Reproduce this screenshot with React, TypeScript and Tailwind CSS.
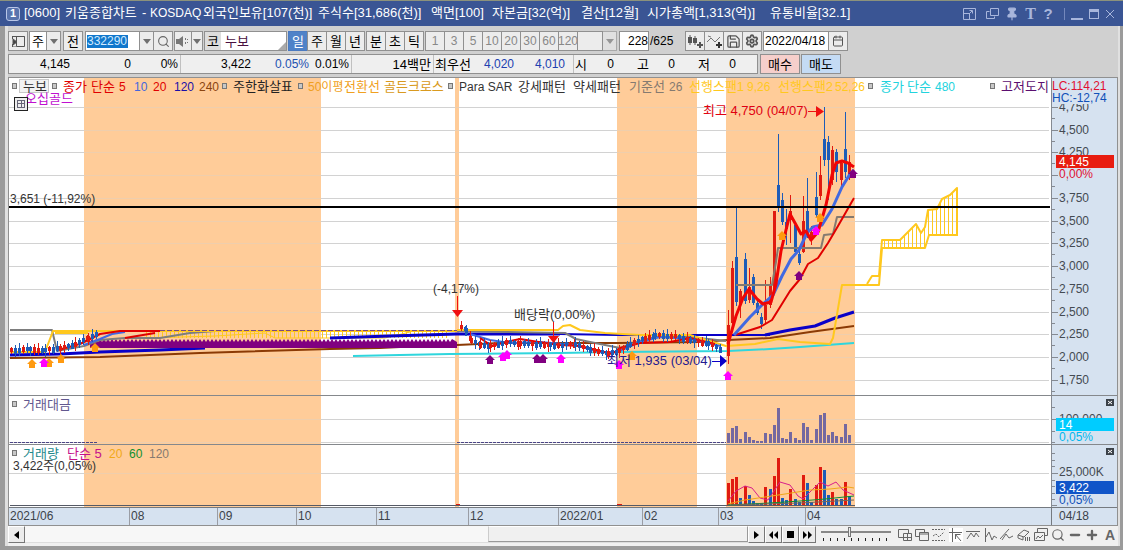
import { useState, type ReactNode } from "react";
import { Search, Settings, Save, Pin, Calendar, Minus, Plus } from "lucide-react";
import { clsx } from "clsx";

const BANDS = [
  [84, 321],
  [455, 459],
  [617, 697],
  [726, 855],
];

const PRICE_TICKS: [string, number][] = [
  ["4,750", 107],
  ["4,500", 130],
  ["4,250", 152],
  ["4,000", 175],
  ["3,750", 198],
  ["3,500", 221],
  ["3,250", 243],
  ["3,000", 266],
  ["2,750", 289],
  ["2,500", 312],
  ["2,250", 334],
  ["2,000", 357],
  ["1,750", 380],
];

const MONTHS: [string, number][] = [
  ["2021/06", 8],
  ["08", 129],
  ["09", 217],
  ["10", 296],
  ["11", 376],
  ["12", 468],
  ["2022/01", 558],
  ["02", 642],
  ["03", 718],
  ["04", 805],
];

// text, x, colour
const LEGEND: [string, number, string][] = [
  ["누보", 23, "#333"],
  ["종가", 63, "#e00000"],
  ["단순", 91, "#e00000"],
  ["5", 119, "#e00000"],
  ["10", 134, "#4466dd"],
  ["20", 153, "#e00000"],
  ["120", 174, "#1a0fa8"],
  ["240", 199, "#8b4510"],
  ["주한화살표", 233, "#222"],
  ["50이평", 308, "#f0a020"],
  ["전환선", 344, "#f0a020"],
  ["골든크로스", 384, "#d99a20"],
  ["Para SAR", 459, "#333"],
  ["강세패턴", 518, "#333"],
  ["약세패턴", 573, "#333"],
  ["기준선", 629, "#857a70"],
  ["26", 669, "#857a70"],
  ["선행스팬1", 689, "#ffc81e"],
  ["9,26", 747, "#ffc81e"],
  ["선행스팬2", 778, "#ffc81e"],
  ["52,26", 835, "#ffc81e"],
  ["종가", 880, "#22d3dd"],
  ["단순", 907, "#22d3dd"],
  ["480", 935, "#22d3dd"],
  ["고저도지", 1001, "#5b0f70"],
];

const RED = "#e01b10";
const BLUE = "#1d5cb8";

// x, high, body top, body bottom, low, rising
type Candle = [number, number, number, number, number, boolean];

const CANDLES: Candle[] = [
  [728, 310, 325, 356, 364, true],
  [732, 261, 268, 323, 330, true],
  [736, 207, 257, 302, 306, false],
  [740, 289, 291, 305, 318, true],
  [745, 253, 259, 301, 304, false],
  [749, 268, 287, 300, 303, true],
  [753, 274, 277, 303, 305, false],
  [757, 300, 303, 313, 315, false],
  [761, 313, 317, 324, 329, false],
  [765, 280, 305, 320, 324, true],
  [770, 277, 286, 305, 308, true],
  [774, 211, 211, 290, 290, true],
  [778, 134, 185, 207, 212, false],
  [782, 193, 200, 222, 225, false],
  [786, 209, 222, 229, 245, false],
  [790, 195, 211, 220, 243, true],
  [795, 222, 225, 252, 255, false],
  [799, 250, 254, 263, 265, false],
  [803, 196, 221, 252, 253, true],
  [807, 178, 211, 235, 238, false],
  [811, 226, 232, 240, 245, true],
  [816, 172, 197, 215, 217, false],
  [820, 156, 175, 196, 200, true],
  [824, 107, 139, 160, 166, false],
  [828, 136, 142, 160, 200, false],
  [832, 146, 150, 180, 185, true],
  [836, 149, 152, 172, 182, false],
  [841, 160, 163, 180, 188, true],
  [845, 112, 149, 172, 178, false],
  [849, 155, 162, 175, 180, true],
];

const AMOUNT = [
  10, 15, 17, 4, 11, 6, 3, 2, 2, 10, 9, 18, 35, 5, 4, 11, 5, 3, 20, 16, 3, 14, 28, 30, 8, 11, 7, 6,
  19, 8,
];
const VOLUME = [
  23, 27, 29, 8, 20, 11, 5, 3, 3, 19, 17, 30, 48, 8, 6, 17, 7, 4, 31, 23, 4, 21, 39, 36, 11, 14, 7,
  7, 24, 10,
];
const VOLUME_UP = "RRRBRBBBBRBRRBBRBBRBBRRBBRBBRB";

// centre line that the small daily candles swing around
const QUIET: [number, number][][] = [
  [[11, 350], [30, 349], [45, 350], [60, 348], [75, 344], [88, 338], [97, 333]],
  [[461, 327], [466, 330], [471, 340], [480, 344], [490, 346], [506, 342], [520, 343], [550, 345],
    [575, 344], [590, 349], [608, 353], [619, 351], [630, 344], [645, 338], [655, 335], [675, 336],
    [690, 340], [708, 343], [722, 350]],
];

function quietCandles(): Candle[] {
  const out: Candle[] = [];
  let n = 0;
  for (const path of QUIET) {
    for (let i = 0; i < path.length - 1; i++) {
      const [x0, y0] = path[i];
      const [x1, y1] = path[i + 1];
      for (let x = x0; x < x1; x += 4) {
        const y = Math.round(y0 + ((y1 - y0) * (x - x0)) / (x1 - x0));
        const j = (n * 7) % 5;
        out.push([x, y - 3 - j, y - 2, y + 2 + (j % 3), y + 4 + ((n * 3) % 4), (n * 5) % 7 < 3]);
        n++;
      }
    }
  }
  return out;
}

const ALL_CANDLES = [...quietCandles(), ...CANDLES];

const ARROWS: [number, number, string][] = [
  [32, 364, "#ff9a10"],
  [49, 363, "#ff9a10"],
  [44, 363, "#ff00ff"],
  [61, 359, "#ff9a10"],
  [95, 348, "#ff9a10"],
  [490, 360, "#800080"],
  [503, 357, "#ff00ff"],
  [507, 355, "#ff00ff"],
  [537, 359, "#800080"],
  [543, 359, "#800080"],
  [561, 359, "#ff00ff"],
  [619, 365, "#ff00ff"],
  [632, 356, "#ff9a10"],
  [728, 376, "#ff00ff"],
  [799, 276, "#800080"],
  [782, 236, "#ff9a10"],
  [816, 231, "#ff00ff"],
  [820, 218, "#ff9a10"],
  [853, 174, "#800080"],
];

const CLOUD_TOP: [number, number][] = [
  [867, 284], [872, 276], [879, 276], [882, 240], [900, 240], [908, 232], [916, 224], [921, 233],
  [925, 227], [928, 210], [937, 209], [942, 199], [950, 195], [957, 188],
];

function cloudY(x: number) {
  for (let i = 0; i < CLOUD_TOP.length - 1; i++) {
    const [x0, y0] = CLOUD_TOP[i];
    const [x1, y1] = CLOUD_TOP[i + 1];
    if (x >= x0 && x <= x1) return y0 + ((y1 - y0) * (x - x0)) / (x1 - x0);
  }
  return 188;
}

// 한글로 시작하는 글자는 13, 숫자는 12
function Label({ x, y, fill = "#333", children }: { x: number; y: number; fill?: string; children: string }) {
  return (
    <text x={x} y={y} fill={fill} fontSize={/^[가-힣]/.test(children) ? 13 : 12}>
      {children}
    </text>
  );
}

function Line({ d, stroke, width = 2 }: { d: string; stroke: string; width?: number }) {
  return <path d={d} fill="none" stroke={stroke} strokeWidth={width} strokeLinejoin="round" />;
}

function Marker({ x, y }: { x: number; y: number }) {
  return <rect x={x + 0.5} y={y + 0.5} width="4" height="5" fill="#c8c8c8" stroke="#777" />;
}

function Bands({ opacity = 1 }: { opacity?: number }) {
  return (
    <g fill="#ffcc99" opacity={opacity}>
      {BANDS.map(([a, b]) => (
        <rect key={a} x={a} y="78" width={b - a} height="429" />
      ))}
    </g>
  );
}

function PricePane() {
  return (
    <g>
      <path
        d={Array.from({ length: 76 }, (_, i) => `M${146 + i * 4}.5 332V338`).join("")}
        stroke="#ffc81e"
      />
      <Line stroke="#ffc81e" d="M146 338L215 336L265 333L275 338L385 338L410 332" width={1} />
      <Line stroke="#2fd6dd" d="M353 356L400 355L450 354L560 353L617 352L728 351L770 349L800 347L854 343" />
      <Line stroke="#8b3a05" d="M10 358L100 357L200 353L330 349L380 348L400 347M457 345L500 343L617 343L700 342L728 340L770 338L810 332L854 326" />
      <Line stroke="#0a00c8" width={3} d="M10 355L60 354L100 352L160 350L205 348M330 338L390 336L457 334L560 334" />
      {/* 전환 구간의 보라색 띠 */}
      <path
        d={
          "M90 348V342" +
          Array.from({ length: 91 }, (_, i) => `L${90 + i * 4} 342L${92 + i * 4} 339`).join("") +
          "L457 342V348Z"
        }
        fill="#800080"
      />
      <Line stroke="#0a00c8" d="M560 334L617 335L728 335L770 335" />
      <Line stroke="#0a00c8" width={3} d="M765 335L790 330L815 326L835 318L854 312" />
      <Line stroke="#7d7d7d" d="M10 330H52L57 351L84 346L100 340L125 338H160L190 333L215 331M457 331L565 333L576 339L590 342L620 348L640 341L655 337L690 337L726 341" />
      <Line stroke="#ffc81e" d="M10 352H45L53 331H98M55 333H88M98 331H457" />
      <path d="M125 330.500H457" stroke="#7a4a80" strokeDasharray="5 2" fill="none" />
      <Line stroke="#ffc81e" d="M457 330H558L563 326L570 325L580 330L605 333L640 335L690 335L726 346L755 344L778 339L800 342L830 344L833 338L842 285H867" />
      <Line stroke="#4169e1" d="M84 345L100 339L112 334L125 332M470 334L490 340L510 343L540 342L575 345L600 352L617 352L640 342L660 337L690 339L720 346" />
      <Line stroke="#e00000" d="M58 350L80 344L100 334L120 331H160M125 338L155 333M480 338L492 346L506 342L520 339L545 343L560 345L580 346L612 354L620 348L640 343L670 342L690 338L715 344" />

      {ALL_CANDLES.map(([x, hi, top, bottom, lo, up], i) => (
        <g key={i} fill={up ? RED : BLUE}>
          <rect x={x} y={hi} width="1" height={lo - hi} />
          <rect x={x - 1} y={top} width="3" height={bottom - top} />
        </g>
      ))}

      <Line stroke="#857a70" d="M736 285H772L776 262L778 248H821L824 235L833 234L837 217H854" />
      <Line stroke="#e00000" d="M735 335L760 327L772 320L790 291L800 279L808 264L818 258L828 243L838 226L846 212L854 198" />
      <Line stroke="#4169e1" width={3} d="M734 335L750 317L763 304L773 295L782 276L791 259L799 250L807 233L813 227L822 225L832 209L842 187L850 174L854 170" />
      <Line stroke="#f00505" width={3} d="M728 344L736 316L743 298L749 289L757 299L763 304L771 302L776 284L781 251L786 230L790 214L795 223L801 234L806 231L811 240L818 232L826 205L832 175L836 163L842 161L848 163L854 167" />

      {/* 선행스팬 구름 */}
      <path
        d={Array.from({ length: 19 }, (_, i) => {
          const x = 884 + i * 4;
          return `M${x}.5 ${cloudY(x)}V${x < 927 ? 248 : 235}`;
        }).join("")}
        stroke="#ffc81e"
      />
      <Line stroke="#ffc81e" d="M842 285H879L882 248H925L929 235H958" />
      <Line stroke="#ffc81e" d={"M" + CLOUD_TOP.map((p) => p.join(" ")).join("L") + "V235"} />

      <rect x="9" y="206" width="1041" height="2" fill="#000" />
      {ARROWS.map(([x, y, fill], i) => (
        <path key={i} d={`M${x} ${y - 5}l5 5h-2v4h-6v-4h-2z`} fill={fill} />
      ))}
      <path d="M457.500 296v15M553.500 322v15M808 111.500h10" stroke="#f01010" />
      <path d="M452 310h11l-5.500 7zM548 336h11l-5.500 7zM816 106v11l8-5.500z" fill="#f01010" />
      <path d="M712 361.500h9" stroke="#0a00c8" />
      <path d="M720 355v12l7-6z" fill="#0a00c8" />
      <Label x={10} y={203}>3,651 (-11,92%)</Label>
      <Label x={433} y={293}>(-4,17%)</Label>
      <Label x={514} y={319}>배당락(0,00%)</Label>
      <Label x={607} y={365} fill="#241a90">최저 1,935 (03/04)</Label>
      <Label x={703} y={115} fill="#e00010">최고 4,750 (04/07)</Label>
    </g>
  );
}

function VolumePanes() {
  return (
    <g>
      {AMOUNT.map((h, i) => (
        <rect key={i} x={CANDLES[i][0] - 1} y={443 - h} width="3" height={h} fill="#7468a0" />
      ))}
      <path d="M10 442.500H97M457 442.500H726" stroke="#4b4585" strokeDasharray="3 1" />
      {VOLUME.map((h, i) => (
        <rect
          key={i}
          x={CANDLES[i][0] - 1}
          y={506 - h}
          width="3"
          height={h}
          fill={VOLUME_UP[i] === "R" ? RED : BLUE}
        />
      ))}
      <path d="M10 505.500H855" stroke="#555a66" />
      <path d="M456 504.500h4M617 504.500h5" stroke={RED} />
      <Line width={1} stroke="#d8208c" d="M728 501L736 491L745 486L752 488L760 498L768 500L776 488L780 482L790 485L798 496L803 499L812 490L820 482L828 486L836 482L843 490L854 495" />
      <Line width={1} stroke="#f0a818" d="M728 504L745 500L765 497L785 494L810 490L830 489L848 487L854 488" />
      <Line width={1} stroke="#109030" d="M728 505L770 503L800 501L825 499L854 496" />
      <Line width={1} stroke="#70685c" d="M728 505L800 503L854 500" />
      <Marker x={12} y={401} />
      <Label x={23} y={409} fill="#62588f">거래대금</Label>
      <Marker x={12} y={450} />
      <Label x={23} y={458} fill="#22898c">거래량</Label>
      <Label x={67} y={458} fill="#c4108c">단순 5</Label>
      <Label x={109} y={458} fill="#f0a818">20</Label>
      <Label x={129} y={458} fill="#109030">60</Label>
      <Label x={149} y={458} fill="#857a70">120</Label>
      <Label x={13} y={470}>3,422주(0,05%)</Label>
    </g>
  );
}

function AxisColumn() {
  return (
    <g>
      <rect x="1051" y="78" width="66" height="447" fill="#d6e2f0" />
      <path d="M1051.500 78V525" stroke="#858a92" />
      {PRICE_TICKS.map(([text, y]) => (
        <g key={text}>
          <path d={`M1052 ${y}.5h6M1052 ${y + 11}.5h3`} stroke="#858a92" />
          <Label x={1059} y={y + 4} fill="#444a52">{text}</Label>
        </g>
      ))}
      <rect x="1052" y="79" width="65" height="25" fill="#d6e2f0" />
      <Label x={1052} y={90} fill="#e01030">LC:114,21</Label>
      <Label x={1052} y={102} fill="#1050b8">HC:-12,74</Label>
      <rect x="1058" y="168" width="50" height="12" fill="#d6e2f0" />
      <Label x={1059} y={178} fill="#e01030">0,00%</Label>
      <rect x="1056" y="155" width="58" height="13" fill="#e81c10" />
      <Label x={1059} y={166} fill="#fff">4,145</Label>

      <path d="M1052 419.500h6M1052 407.500h3M1052 431.500h3M1052 442.500h3" stroke="#858a92" />
      <Label x={1059} y={423} fill="#444a52">100,000</Label>
      <rect x="1056" y="418" width="58" height="13" fill="#00ccff" />
      <Label x={1059} y={429} fill="#fff">14</Label>
      <Label x={1059} y={441} fill="#00b8ee">0,05%</Label>
      <path
        d="M1052 473.500h6M1052 453.500h3M1052 460.500h3M1052 466.500h3M1052 480.500h3M1052 486.500h3M1052 493.500h3M1052 499.500h3M1052 505.500h5"
        stroke="#858a92"
      />
      <Label x={1059} y={476} fill="#444a52">25,000K</Label>
      <rect x="1056" y="481" width="58" height="13" fill="#1055c8" />
      <Label x={1059} y={492} fill="#fff">3,422</Label>
      <Label x={1059} y={504} fill="#1050b8">0,05%</Label>
      {[399, 448].map((y) => (
        <g key={y}>
          <rect x="1106" y={y} width="8" height="7" fill="#3b4148" />
          <path d={`M1108 ${y + 2}l4 3m0-3l-4 3`} stroke="#fff" />
        </g>
      ))}
    </g>
  );
}

function Chart() {
  return (
    <svg viewBox="9 78 1108 447" className="block w-full bg-white" role="img" aria-label="누보 일봉 차트">
      <Bands />
      <path
        d={[...PRICE_TICKS.map((t) => t[1]), 419, 442, 473].map((y) => `M9 ${y}.5H1049`).join("")}
        stroke="#d2d2d2"
      />
      <Bands opacity={0.65} />
      <VolumePanes />
      <PricePane />
      {[12, 52, 222, 298, 448, 868, 990].map((x) => (
        <Marker key={x} x={x} y={83} />
      ))}
      <rect x="19.500" y="79.500" width="29" height="13" fill="#f2f2f2" stroke="#c8c8c8" />
      {LEGEND.map(([text, x, fill]) => (
        <Label key={x} x={x} y={91} fill={fill}>{text}</Label>
      ))}
      <Label x={25} y={103} fill="#c010d0">오십골드</Label>
      <rect x="14.500" y="97.500" width="13" height="13" fill="#eee" stroke="#222" />
      <path d="M17 100.500h8M17 103.500h8M17 107.500h8M17.500 100v8M21.500 100v8M24.500 100v8" stroke="#667" />
      <AxisColumn />
      <path d="M9 395.500H1117M9 444.500H1117" stroke="#85888c" />
      <rect x="9" y="507" width="1108" height="18" fill="#d6e2f0" />
      <path d="M9 507.500H1117M1051.500 508V525" stroke="#757a80" />
      {MONTHS.map(([text, x]) => (
        <g key={text}>
          {x > 10 && <path d={`M${x}.5 508V525`} stroke="#9a9da5" />}
          <Label x={x + 2} y={520} fill="#3c424a">{text}</Label>
        </g>
      ))}
      <Label x={1059} y={520} fill="#3c424a">04/18</Label>
    </svg>
  );
}

const TITLE: [string, string][] = [
  ["[0600]", "w-[41px]"],
  ["키움종합차트", "w-[77px]"],
  ["-", "w-2"],
  ["KOSDAQ", "w-[53px] text-[12px] leading-[15px]"],
  ["외국인보유[107(천)]", "w-[115px]"],
  ["주식수[31,686(천)]", "w-[113px]"],
  ["액면[100]", "w-[61px]"],
  ["자본금[32(억)]", "w-[89px]"],
  ["결산[12월]", "w-[66px]"],
  ["시가총액[1,313(억)]", "w-[123px]"],
  ["유통비율[32.1]", "w-[96px]"],
];

function TitleBar() {
  return (
    <header className="flex h-[26px] items-center border-t border-[#8c927c] bg-[#3a5594] pl-1.5 pr-2 text-white">
      <span className="mr-1 flex size-[14px] items-center justify-center rounded-[3px] border border-[#b8c6e8] bg-[#5873ad] text-[11px] font-bold leading-none">
        1
      </span>
      <h1 className="flex whitespace-pre text-[13px]">
        {TITLE.map(([text, w]) => (
          <span key={text} className={clsx("shrink-0", w)}>{text}</span>
        ))}
      </h1>
      <div className="ml-auto flex items-center gap-[6px] text-[#a8b6dc]">
        <button aria-label="크기 고정">
          <svg width="13" height="12" fill="none" stroke="currentColor">
            <path d="M.5.5h12v11H.5zM.5 5.500h6v6" />
            <path d="M6 6l3-3M6.500 2.500h3v3" />
          </svg>
        </button>
        <button aria-label="창 복사" className="ml-1">
          <svg width="13" height="12" fill="none" stroke="currentColor">
            <path d="M4.500.5h8v7h-8zM3.500 3.500h-3v7h8v-2" />
          </svg>
        </button>
        <button aria-label="고정"><Pin size={14} fill="currentColor" /></button>
        <button className="font-['Liberation_Serif',serif] text-[16px] font-bold leading-none">T</button>
        <button className="w-3 text-[15px] font-bold leading-none">?</button>
        <span className="ml-1 h-3 w-px bg-[#7488bc]" />
        <button aria-label="최소화" className="flex h-3 w-3 items-end"><span className="h-0.5 w-full bg-current" /></button>
        <button aria-label="최대화" className="h-2.5 w-2.5 border border-t-[3px] border-current" />
        <button aria-label="닫기">
          <svg width="10" height="10" stroke="currentColor"><path d="M1 1l8 8M9 1l-8 8" /></svg>
        </button>
      </div>
    </header>
  );
}

const frame = "flex h-5 shrink-0 items-center justify-center border";
const cell = `${frame} border-[#909090] bg-[#ececec]`;
const field = `${frame} border-[#909090] bg-white`;

function Caret() {
  return <svg width="8" height="5"><path d="M0 0h8l-4 5z" fill="#707070" /></svg>;
}

function Toolbar() {
  const [period, setPeriod] = useState("일");
  const [code, setCode] = useState("332290");
  const [count, setCount] = useState("228");
  const [date, setDate] = useState("2022/04/18");

  return (
    <div className="flex text-[13px] text-black">
      <button aria-label="목록 열기" className={clsx(cell, "w-5")}>
        <svg width="13" height="12" fill="none" stroke="#555">
          <path d="M4.500 1.500h8v10h-8zM.5 1.500h12M.5 1v3M.5 9v3h4" />
          <path d="M1 4l4 3-4 3z" fill="#444" />
        </svg>
      </button>
      <button className={clsx(field, "ml-px w-[18px]")}>주</button>
      <button aria-label="종류 선택" className={clsx(cell, "-ml-px w-[15px]")}><Caret /></button>
      <button className={clsx(cell, "ml-0.5 w-5")}>전</button>
      <div className={clsx(field, "ml-0.5 w-[55px] justify-start pl-px")}>
        <input
          aria-label="종목코드"
          value={code}
          onChange={(e) => setCode(e.target.value)}
          className="h-[13px] w-[41px] bg-[#1177cc] text-[12px] text-[#d0eaff] outline-none"
        />
      </div>
      <button aria-label="종목 목록" className={clsx(cell, "-ml-px w-[15px]")}><Caret /></button>
      <button aria-label="종목 검색" className={clsx(cell, "-ml-px w-5")}>
        <Search size={13} color="#666" />
      </button>
      <button aria-label="소리" className={clsx(cell, "ml-px w-[18px]")}>
        <svg width="14" height="11" fill="#777">
          <path d="M0 3h3l4-3v11L3 8H0zM9 2h1v2H9zM9 6h1v2H9zM11 3h1v1h-1zM11 6h1v1h-1z" />
        </svg>
      </button>
      <button aria-label="소리 설정" className={clsx(cell, "-ml-px w-3")}><Caret /></button>
      <div className={clsx(field, "ml-px w-[83px] justify-start text-[#4a1040]")}>
        <span className="mr-1 flex h-full w-4 items-center justify-center bg-[#ddd] text-black">코</span>
        누보
        <svg width="8" height="8" className="ml-auto self-end"><path d="M8 0v8H0z" fill="#aaa" /></svg>
      </div>
      <div className="ml-px flex">
        {["일", "주", "월", "년", "분", "초", "틱"].map((p) => (
          <button
            key={p}
            onClick={() => setPeriod(p)}
            aria-pressed={period === p}
            className={clsx(
              frame,
              "w-5",
              p === "분" ? "ml-px" : "-ml-px first:ml-0",
              period === p
                ? "border-[#4a7ac0] bg-[#4f82c8] text-white"
                : "border-[#909090] bg-[#ececec]",
            )}
          >
            {p}
          </button>
        ))}
      </div>
      <div className="ml-px flex text-[12px] text-[#888]">
        {["1", "3", "5", "10", "20", "30", "60", "120"].map((m) => (
          <button key={m} disabled className={clsx(cell, "-ml-px w-5 first:ml-0")}>{m}</button>
        ))}
      </div>
      <span className={clsx(cell, "-ml-px w-[26px]")} />
      <button disabled aria-label="분 선택" className={clsx(cell, "-ml-px w-[15px] opacity-60")}><Caret /></button>
      <input
        aria-label="봉 개수"
        value={count}
        onChange={(e) => setCount(e.target.value)}
        className={clsx(field, "ml-0.5 w-[30px] text-right text-[12px] outline-none")}
      />
      <span className="flex w-9 items-center pl-px text-[12px]">/625</span>
      <button aria-label="봉 추가" className={clsx(cell, "w-5")}>
        <svg width="15" height="13" fill="#555">
          <path d="M0 2h4v6H0zM1.500 0h1v10h-1zM5 3h4v5H5zM6.500 1h1v9h-1zM9 9h6v2H9zM11 7h2v6h-2z" />
        </svg>
      </button>
      <button aria-label="지표 추가" className={clsx(cell, "-ml-px w-5")}>
        <svg width="15" height="13" fill="none" stroke="#777">
          <path d="M0 7l4-4 4 4 5-5M1 1l3 1" />
          <path d="M9 10h6M12 7v6" stroke="#333" strokeWidth="2" />
        </svg>
      </button>
      <button aria-label="저장" className={clsx(cell, "-ml-px w-5")}><Save size={15} color="#555" /></button>
      <button aria-label="설정" className={clsx(cell, "-ml-px w-5")}><Settings size={14} color="#555" strokeWidth={3} /></button>
      <input
        aria-label="기준일"
        value={date}
        onChange={(e) => setDate(e.target.value)}
        className={clsx(field, "ml-px w-[66px] pl-px text-[12px] outline-none")}
      />
      <button aria-label="달력" className={clsx(cell, "-ml-px w-5")}><Calendar size={12} color="#555" /></button>
    </div>
  );
}

const QUOTES: [string, string][] = [
  ["4,145", "w-[61px] text-[12px]"],
  ["0", "w-[61px] text-[12px]"],
  ["0%", "w-[50px] border-r pr-0.5 text-[12px]"],
  ["3,422", "w-[70px] text-[12px]"],
  ["0.05%", "w-[58px] text-[12px] text-[#1c4fb0]"],
  ["0.01%", "w-[43px] border-r pr-0.5 text-[12px]"],
  ["14백만", "w-[82px] border-r pr-0.5"],
  ["최우선", "w-[37px]"],
  ["4,020", "w-[43px] text-[12px] text-[#2040b0]"],
  ["4,010", "w-[60px] border-r pr-2 text-[12px] text-[#2040b0]"],
  ["시", "w-[13px]"],
  ["0", "w-[27px] text-[12px]"],
  ["고", "w-[35px]"],
  ["0", "w-[26px] text-[12px]"],
  ["저", "w-[35px]"],
  ["0", "w-[26px] text-[12px]"],
];

function QuoteRow() {
  return (
    <div className="mt-[3px] flex h-[20px] text-[13px] text-black">
      <div className="flex w-[750px] shrink-0 items-center border border-[#909090] bg-[#efefef]">
        {QUOTES.map(([text, cls], i) => (
          <span key={i} className={clsx("flex h-full shrink-0 items-center justify-end whitespace-nowrap border-[#c0c0c0]", cls)}>
            {text}
          </span>
        ))}
      </div>
      <button className="ml-0.5 w-10 border border-[#909090] bg-[#f6cfcb]">매수</button>
      <button className="ml-px w-10 border border-[#909090] bg-[#c4dbf4]">매도</button>
    </div>
  );
}

const TOOLS: [string, ReactNode][] = [
  ["창 추가", <path d="M5 9.500H.5v-8h10V5M5.500 5.500h8v7h-8zM9.500 6v6M6 9.500h7" />],
  ["창 분리", <path d="M4 8.500H.5v-7h9V4M4.500 4.500h9v8h-9zM4.500 6h9" />],
  ["구간 표시", <path d="M0 1.500h13M0 12.500h13M1 8l3-2 3 3 5-5" strokeDasharray="2 1" />],
  ["십자선", <path d="M3.500 0v14M0 4.500h13M12 13L6 6m.5 5V6.500h5" />],
  ["수평선", <path d="M0 3.500h14M1 11l4-6 3 4 2-4 3 4" />],
  ["수직선", <path d="M2.500 0v14M3 9l3-5 3 8 2-4 3 2" />],
  ["추세선", <path d="M0 11L9 1M2 12l4-6 3 4 4-2" />],
  ["지우개", <path d="M1 7l6-5 5 2-5 5zM1 7v3l5 2V9M8.500 9v4m2-4v4m2-4v4" />],
  ["이미지", <path d="M3.500 4V.5h10v7H11M.5 4.500h10v8H.5zM2 11l2-3 2 2 3-3" />],
];

function Footer() {
  const [zoom, setZoom] = useState(4);
  const btn = "flex h-[17px] w-[17px] shrink-0 items-center justify-center border border-[#777] border-l-white border-t-white bg-[#ececec]";

  return (
    <footer className="flex h-[20px] bg-[#f0f0f0]">
      <button aria-label="왼쪽으로" className={btn}>
        <svg width="5" height="8"><path d="M5 0v8L0 4z" /></svg>
      </button>
      <div className="h-[17px] grow border-b border-[#ddd] bg-[#f7f7f7]">
        <div className="ml-auto h-full w-[36%] border border-[#999] border-l-[#ccc] border-t-white bg-[#f0f0f0]" />
      </div>
      <button aria-label="재생" className={btn}><svg width="5" height="8"><path d="M0 0v8l5-4z" /></svg></button>
      <button aria-label="뒤로" className={btn}><svg width="9" height="8"><path d="M4 0v8L0 4zM9 0v8L5 4z" /></svg></button>
      <button aria-label="정지" className={btn}><svg width="7" height="7"><path d="M0 0h7v7H0z" /></svg></button>
      <button aria-label="앞으로" className={btn}><svg width="9" height="8"><path d="M0 0v8l4-4zM5 0v8l4-4z" /></svg></button>
      <div className="mx-[5px] flex w-[70px] shrink-0 flex-col">
        <input
          type="range"
          aria-label="확대 비율"
          min={0}
          max={10}
          value={zoom}
          onChange={(e) => setZoom(Number(e.target.value))}
          className="h-3 w-full appearance-none bg-transparent [&::-webkit-slider-runnable-track]:h-0.5 [&::-webkit-slider-runnable-track]:bg-[#888] [&::-webkit-slider-thumb]:-mt-1 [&::-webkit-slider-thumb]:h-2.5 [&::-webkit-slider-thumb]:w-[3px] [&::-webkit-slider-thumb]:appearance-none [&::-webkit-slider-thumb]:border [&::-webkit-slider-thumb]:border-[#777] [&::-webkit-slider-thumb]:bg-[#eee]"
        />
        <svg width="70" height="3">
          <path d={Array.from({ length: 10 }, (_, i) => `M${2 + i * 7}.5 0v3`).join("")} stroke="#222" />
        </svg>
      </div>
      <div className="ml-0.5 flex h-[18px] items-center gap-[3px] text-[#666]">
        {TOOLS.map(([name, icon]) => (
          <button key={name} aria-label={name} className={clsx(name === "십자선" && "bg-white")}>
            <svg width="14" height="14" fill="none" stroke="currentColor">{icon}</svg>
          </button>
        ))}
        <button aria-label="찾기"><Search size={14} /></button>
        <button aria-label="축소"><Minus size={14} strokeWidth={4} /></button>
        <button aria-label="확대"><Plus size={14} strokeWidth={4} /></button>
        <button className="w-4 text-[14px] font-bold leading-none">A</button>
      </div>
    </footer>
  );
}

export default function App() {
  return (
    <div className="min-h-screen bg-[#9b9b9b] pb-1 font-['Liberation_Sans','Noto_Sans_CJK_KR',sans-serif] leading-none">
      <TitleBar />
      <main className="ml-[5px] mr-[3px] border-l-[3px] border-r-2 border-[#e0e0e0] bg-[#d0d0d0] pt-[5px]">
        <Toolbar />
        <QuoteRow />
        <div className="mt-[3px] border border-[#909090]">
          <Chart />
        </div>
        <Footer />
      </main>
    </div>
  );
}
